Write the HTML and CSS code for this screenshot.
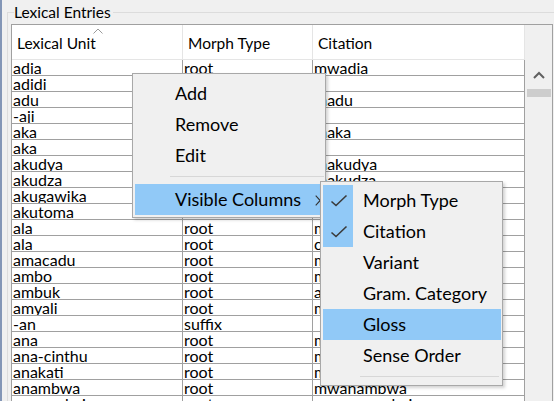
FILE: index.html
```html
<!DOCTYPE html>
<html>
<head>
<meta charset="utf-8">
<link rel="stylesheet" href="styles.css">
</head>
<body>
<div class="app">
  <div class="edge"></div>
  <div class="group">
    <div class="group-title"><span>Lexical Entries</span></div>
    <div class="group-body">
      <div class="grid">
        <div class="table">
          <div class="head">
            <div class="hc c1">Lexical Unit<svg class="sort" width="10" height="6" viewBox="0 0 10 6"><path d="M0.5 5.5 L5 1 L9.5 5.5" fill="none" stroke="#9a9a9a" stroke-width="1"/></svg></div>
            <div class="hc c2">Morph Type</div>
            <div class="hc c3">Citation</div>
          </div>
          <div class="row"><div class="cell c1">adia</div><div class="cell c2">root</div><div class="cell c3">mwadia</div></div>
          <div class="row"><div class="cell c1">adidi</div><div class="cell c2">root</div><div class="cell c3"></div></div>
          <div class="row"><div class="cell c1">adu</div><div class="cell c2">root</div><div class="cell c3">madu</div></div>
          <div class="row"><div class="cell c1">-aji</div><div class="cell c2">suffix</div><div class="cell c3"></div></div>
          <div class="row"><div class="cell c1">aka</div><div class="cell c2">root</div><div class="cell c3">maka</div></div>
          <div class="row"><div class="cell c1">aka</div><div class="cell c2">root</div><div class="cell c3"></div></div>
          <div class="row"><div class="cell c1">akudya</div><div class="cell c2">root</div><div class="cell c3">makudya</div></div>
          <div class="row"><div class="cell c1">akudza</div><div class="cell c2">root</div><div class="cell c3">makudza</div></div>
          <div class="row"><div class="cell c1">akugawika</div><div class="cell c2">root</div><div class="cell c3">mwakugawika</div></div>
          <div class="row"><div class="cell c1">akutoma</div><div class="cell c2">root</div><div class="cell c3">mwakutoma</div></div>
          <div class="row"><div class="cell c1">ala</div><div class="cell c2">root</div><div class="cell c3">mwala</div></div>
          <div class="row"><div class="cell c1">ala</div><div class="cell c2">root</div><div class="cell c3">chala</div></div>
          <div class="row"><div class="cell c1">amacadu</div><div class="cell c2">root</div><div class="cell c3">mwamacadu</div></div>
          <div class="row"><div class="cell c1">ambo</div><div class="cell c2">root</div><div class="cell c3">mwambo</div></div>
          <div class="row"><div class="cell c1">ambuk</div><div class="cell c2">root</div><div class="cell c3">ambuk</div></div>
          <div class="row"><div class="cell c1">amyali</div><div class="cell c2">root</div><div class="cell c3">mwamyali</div></div>
          <div class="row"><div class="cell c1">-an</div><div class="cell c2">suffix</div><div class="cell c3"></div></div>
          <div class="row"><div class="cell c1">ana</div><div class="cell c2">root</div><div class="cell c3">mwana</div></div>
          <div class="row"><div class="cell c1">ana-cinthu</div><div class="cell c2">root</div><div class="cell c3">mwana-cinthu</div></div>
          <div class="row"><div class="cell c1">anakati</div><div class="cell c2">root</div><div class="cell c3">mwanakati</div></div>
          <div class="row"><div class="cell c1">anambwa</div><div class="cell c2">root</div><div class="cell c3">mwanambwa</div></div>
          <div class="row"><div class="cell c1">ana-mabvi</div><div class="cell c2">root</div><div class="cell c3">mwana-mabvi</div></div>
        </div>
        <div class="vscroll">
          <div class="vs-head"></div>
          <div class="vs-btn"><svg width="12" height="8" viewBox="0 0 12 8"><path d="M1 7 L6 2 L11 7" fill="none" stroke="#606060" stroke-width="2"/></svg></div>
          <div class="vs-thumb"></div>
        </div>
      </div>
    </div>
  </div>
</div>

<div class="menu main">
  <div class="item"><span class="chk"></span><span class="lbl">Add</span></div>
  <div class="item"><span class="chk"></span><span class="lbl">Remove</span></div>
  <div class="item"><span class="chk"></span><span class="lbl">Edit</span></div>
  <div class="sep"></div>
  <div class="item hl"><span class="chk"></span><span class="lbl">Visible Columns</span><svg class="arrow" width="6" height="11" viewBox="0 0 6 11"><path d="M0.7 0.7 L5.2 5.5 L0.7 10.3" fill="none" stroke="#333" stroke-width="1.1"/></svg></div>
</div>

<div class="menu sub">
  <div class="item"><span class="chk on"><svg width="18" height="14" viewBox="0 0 18 14"><path d="M1.5 7.5 L6 11.5 L16.5 1.5" fill="none" stroke="#3a3a3a" stroke-width="1.6"/></svg></span><span class="lbl">Morph Type</span></div>
  <div class="item"><span class="chk on"><svg width="18" height="14" viewBox="0 0 18 14"><path d="M1.5 7.5 L6 11.5 L16.5 1.5" fill="none" stroke="#3a3a3a" stroke-width="1.6"/></svg></span><span class="lbl">Citation</span></div>
  <div class="item"><span class="chk"></span><span class="lbl">Variant</span></div>
  <div class="item"><span class="chk"></span><span class="lbl">Gram. Category</span></div>
  <div class="item hl"><span class="chk"></span><span class="lbl">Gloss</span></div>
  <div class="item"><span class="chk"></span><span class="lbl">Sense Order</span></div>
  <div class="sep sub-sep"></div>
</div>
</body>
</html>
```
FILE: styles.css
```css
html, body {
  margin: 0;
  padding: 0;
  width: 554px;
  height: 401px;
  overflow: hidden;
  background: #f0f0f0;
  font-family: Lato, "Liberation Sans", sans-serif;
  color: #000;
}

.app {
  display: flex;
  height: 401px;
  overflow: hidden;
}

.edge {
  width: 2px;
  flex: none;
  background: #8396b6;
}

.group {
  margin-left: 5px;
  padding-top: 4px;
  flex: 1;
  min-width: 0;
}

.group-title {
  display: flex;
  height: 16px;
  font-size: 15.5px;
  line-height: 16px;
}

.group-title::before {
  content: "";
  width: 6px;
  margin-top: 8px;
  border-top: 1px solid #dcdcdc;
  border-left: 1px solid #dcdcdc;
}

.group-title span {
  padding-right: 2px;
  white-space: nowrap;
}

.group-title::after {
  content: "";
  flex: 1;
  margin-top: 8px;
  border-top: 1px solid #dcdcdc;
}

.group-body {
  border-left: 1px solid #dcdcdc;
  padding-left: 3px;
  padding-top: 4px;
}

.grid {
  width: 542px;
  height: 377px;
  box-sizing: border-box;
  border: 1px solid #a0a0a0;
  border-bottom: none;
  display: flex;
  overflow: hidden;
  background: #fff;
}

.table {
  width: 513px;
  flex: none;
}

.head {
  display: flex;
  height: 35px;
  box-sizing: border-box;
  border-bottom: 1px solid #e5e5e5;
  background: #fff;
}

.hc {
  position: relative;
  box-sizing: border-box;
  height: 34px;
  padding: 2px 0 0 5px;
  line-height: 32px;
  font-size: 15.5px;
  border-right: 1px solid #e5e5e5;
  white-space: nowrap;
}

.sort {
  position: absolute;
  left: 81px;
  top: 3px;
}

.c1 { width: 171px; }
.c2 { width: 130px; }
.c3 { width: 212px; }

.row {
  display: flex;
  height: 16px;
  box-sizing: border-box;
  border-bottom: 1px solid #a0a0a0;
}

.cell {
  box-sizing: border-box;
  height: 15px;
  padding-left: 1px;
  font-size: 16px;
  line-height: 15px;
  border-right: 1px solid #a0a0a0;
  overflow: hidden;
  white-space: nowrap;
}

.vscroll {
  flex: 1;
  background: #f0f0f0;
}

.vs-head {
  height: 35px;
}

.vs-btn {
  height: 29px;
  padding-left: 8px;
  padding-top: 11px;
  box-sizing: border-box;
}

.vs-btn svg {
  display: block;
}

.vs-thumb {
  height: 8px;
  margin: 0 1px 0 2px;
  background: #cdcdcd;
}

/* context menus */
.menu {
  position: absolute;
  box-sizing: border-box;
  background: #f0f0f0;
  border: 1px solid #a8a8a8;
  box-shadow: 2px 2px 3px rgba(0, 0, 0, 0.18);
  font-size: 18px;
}

.main {
  left: 132px;
  top: 73px;
  width: 194px;
  height: 145px;
  padding: 4px 1px 2px 2px;
}

.sub {
  left: 320px;
  top: 181px;
  width: 183px;
  height: 205px;
  padding: 3px 1px 0 2px;
}

.item {
  display: flex;
  align-items: flex-start;
  height: 31px;
  line-height: 31px;
  white-space: nowrap;
}

.item.hl {
  background: #91c9f7;
}

.chk {
  width: 30px;
  height: 31px;
  flex: none;
  display: flex;
  align-items: center;
  justify-content: center;
}

.chk.on {
  background: #91c9f7;
}

.chk svg {
  display: block;
  margin-left: 1px;
}

.lbl {
  margin-left: 10px;
}

.arrow {
  margin-left: auto;
  margin-right: 3px;
  margin-top: 11px;
}

.sep {
  height: 1px;
  background: #d7d7d7;
  margin: 5px 0 7px 35px;
}

.sub-sep {
  margin: 5px 2px 8px 37px;
}
```
